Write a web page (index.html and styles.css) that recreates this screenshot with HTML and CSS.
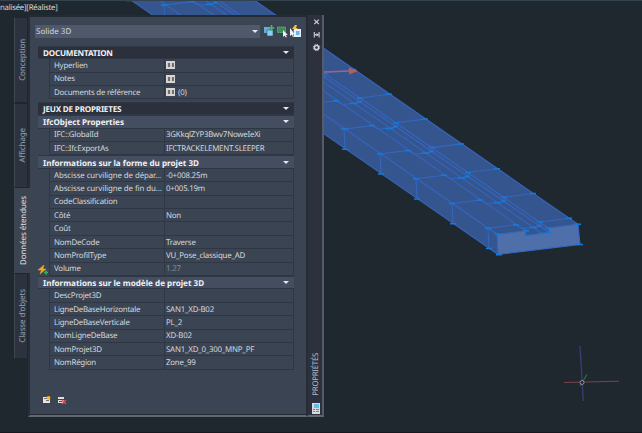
FILE: index.html
```
<!DOCTYPE html>
<html lang="fr">
<head>
<meta charset="utf-8">
<title>Propriétés</title>
<link rel="stylesheet" href="styles.css">
</head>
<body>
<svg class="scene" viewBox="0 0 642 433" width="642" height="433">
  <defs>
    <g id="section">
      <path class="edge" d="M489 248.500L488 228.300L516 224.800L523 228.500L540 226.500V222L569 218.300"/>
      <path class="grip" d="M486 248.500h6M485 228.300h6M513 224.800h6M530 227.600h7M537 225.800h5M537 222h6M566 218.300h6"/>
    </g>
  </defs>
  <path class="solid" d="M131 0H254L578 224.300L580 244.500L498 254.500Z"/>
  <path class="face" d="M497 234.300L526 230.800V235.500L549 232.500L548 228L578 224.300L580 244.500L498 254.500Z"/>
  <path class="edge" d="M131 0L498 254.500L580 244.500L578 224.300L254 0M497 234.300L159 0M526 231L192 0M542 233.500L205 0M549 232.500L213 0M548 228L218 0M498 254.500L497 234.300L526 230.800L525 235.500L549 232.500L548 228L578 224.300"/>
  <use href="#section"/>
  <use href="#section" x="-36" y="-24.800"/>
  <use href="#section" x="-72" y="-49.600"/>
  <use href="#section" x="-108" y="-74.400"/>
  <use href="#section" x="-144" y="-99.200"/>
  <use href="#section" x="-180" y="-124"/>
  <use href="#section" x="-216" y="-148.800"/>
  <use href="#section" x="-252" y="-173.600"/>
  <use href="#section" x="-288" y="-198.400"/>
  <use href="#section" x="-324" y="-223.200"/>
  <use href="#section" x="-360" y="-248"/>
  <path class="grip" d="M495 234.300h6M496 254.700h6M523 230.800h6M525 235.700h5M540 233.500h6M547 232.500h5M545 228h6M575 224.300h6M577 244.500h6"/>
  <path class="arrow" d="M323 72L350 71"/>
  <path class="arrow-head" d="M349 67.500L358 71L349 74.500Z"/>
  <path class="axis-x" d="M564 382.500L619 381.200"/>
  <path class="axis-z" d="M580 346L583.300 401"/>
  <path class="axis-y" d="M580 386L587 374.500"/>
  <circle class="origin" cx="582" cy="382.500" r="2"/>
</svg>
<div class="topline"></div>
<div class="viewlabel">nalisée][Réaliste]</div>
<div class="palette">
  <nav class="tabs">
    <div class="tab t1"><span>Conception</span></div>
    <div class="tab t2"><span>Affichage</span></div>
    <div class="tab t3 active"><span>Données étendues</span></div>
    <div class="tab t4"><span>Classe d'objets</span></div>
  </nav>
  <main class="panel">
    <div class="toolbar">
      <div class="combo"><span>Solide 3D</span><i class="caret"></i></div>
      <svg class="tools" viewBox="0 0 39 13" width="39" height="13">
        <path fill="#63add9" d="M1 2h6v6H1z"/><path fill="#8bcdf0" stroke="#34546a" stroke-width=".6" d="M4 5h6v6H4z"/>
        <path stroke="#4fb577" stroke-width="1.600" d="M8.500 0v6M5.800 3h5.500"/>
        <path fill="#398c58" stroke="#66c78b" stroke-width=".8" stroke-dasharray="1.200 .6" d="M14.500 2h8v5.500h-8z"/>
        <path fill="#eef0f2" d="M20 5v7l1.600-1.500 1.200 2 1-.6-1-1.900h2z"/>
        <path fill="#f4bd54" d="M32 0l-3 4h2l-1 3 5-4h-2l1-3z"/>
        <path fill="#f2f3f4" d="M27 3v8l1.700-1.600L30 12l1-.6-1.200-2H32z"/>
        <path fill="#e8edf1" d="M31 4h7v8h-7z"/><path fill="#65b8e9" d="M33 6h3.500v4H33z"/>
      </svg>
    </div>
    <div class="grid">
      <div class="head dark">DOCUMENTATION<i class="caret"></i></div>
      <div class="row"><b>Hyperlien</b><span><i class="table"></i></span></div>
      <div class="row"><b>Notes</b><span><i class="table"></i></span></div>
      <div class="row"><b>Documents de référence</b><span><i class="table"></i>(0)</span></div>
      <div class="head dark second">JEUX DE PROPRIETES<i class="caret"></i></div>
      <div class="head">IfcObject Properties<i class="caret"></i></div>
      <div class="row"><b>IFC::GlobalId</b><span>3GKkqlZYP3Bwv7NoweIeXi</span></div>
      <div class="row"><b>IFC::IfcExportAs</b><span>IFCTRACKELEMENT.SLEEPER</span></div>
      <div class="head">Informations sur la forme du projet 3D<i class="caret"></i></div>
      <div class="row"><b class="wide">Abscisse curviligne de dépar...</b><span>-0+008.25m</span></div>
      <div class="row"><b class="wide">Abscisse curviligne de fin du...</b><span>0+005.19m</span></div>
      <div class="row"><b>CodeClassification</b><span></span></div>
      <div class="row"><b>Côté</b><span>Non</span></div>
      <div class="row"><b>Coût</b><span></span></div>
      <div class="row"><b>NomDeCode</b><span>Traverse</span></div>
      <div class="row"><b>NomProfilType</b><span>VU_Pose_classique_AD</span></div>
      <div class="row"><svg class="bolt" viewBox="0 0 10 10" width="10" height="10"><path fill="#f5a91c" stroke="#f5a91c" stroke-width=".5" d="M6 0L0 5h3.500L2 9l6-5H5z"/><path stroke="#32b15c" stroke-width="1.500" d="M8 5.500v4M6 7.500h4"/></svg><b>Volume</b><span class="muted">1.27</span></div>
      <div class="head">Informations sur le modèle de projet 3D<i class="caret"></i></div>
      <div class="row"><b>DescProjet3D</b><span></span></div>
      <div class="row"><b>LigneDeBaseHorizontale</b><span>SAN1_XD-B02</span></div>
      <div class="row"><b>LigneDeBaseVerticale</b><span>PL_2</span></div>
      <div class="row"><b>NomLigneDeBase</b><span>XD-B02</span></div>
      <div class="row"><b>NomProjet3D</b><span>SAN1_XD_0_300_MNP_PF</span></div>
      <div class="row"><b>NomRégion</b><span>Zone_99</span></div>
    </div>
    <svg class="actions" viewBox="0 0 26 9" width="26" height="9">
      <path fill="#e9e4e2" d="M1 1h7v6H1z"/><path fill="#776c70" d="M2 2h3v1H2zM4 4h3v1H4z"/><circle cx="6.500" cy="1.800" r="1.900" fill="#f2b628"/>
      <path fill="#e0dcdb" d="M16 1h6v2h-6zM16 4h6v3h-6z"/><path fill="#4d5059" d="M17 5h3v1h-3z"/><path stroke="#e24b50" stroke-width="1.300" d="M20 4l4 4M24 4l-4 4"/>
    </svg>
  </main>
  <aside class="rail">
    <svg viewBox="0 0 10 40" width="10" height="40">
      <g fill="none" stroke="#d0d3d8"><path stroke-width="1.200" d="M3.300 3.600l4.500 4.500M7.800 3.600l-4.500 4.500"/><path stroke-width="1.100" d="M3.300 16v5.500M8.100 16v5.500"/><circle cx="5.500" cy="31.500" r="2.100" stroke-width="1.500"/><circle cx="5.500" cy="31.500" r="3.200" stroke-width="1" stroke-dasharray="1.250"/></g>
      <path fill="#d0d3d8" d="M3.500 18.800l2.200-1.500v3zM8.100 18.800L5.900 17.300v3z"/>
    </svg>
    <div class="railtext">PROPRIÉTÉS</div>
    <svg viewBox="0 0 8 11" width="8" height="11"><path fill="#d8dadc" d="M0 0h8v11H0z"/><path fill="#67bde9" d="M2 1h5v4H2z"/><path fill="#7c8288" d="M1 6h2v1H1zM4 6h3v1H4zM1 8h2v1H1zM4 8h3v1H4z"/></svg>
  </aside>
</div>
<div class="baseline"></div>
</body>
</html>
```
FILE: styles.css
```
* { box-sizing: border-box; }
body { margin: 0; width: 642px; height: 433px; overflow: hidden; position: relative; background: #20282f; font: 7.9px/1 "Noto Sans", "Open Sans", sans-serif; letter-spacing: -.23px; text-rendering: geometricPrecision; color: #d4d8de; }
.scene { position: absolute; inset: 0; }
.solid { fill: #35558f; }
.face { fill: #4f6faa; }
.edge { fill: none; stroke: #3565be; stroke-width: 1.1; }
.grip { fill: none; stroke: #127bdc; stroke-width: 1.5; }
.arrow { stroke: #a7636d; stroke-width: 1.5; }
.arrow-head { fill: #b75e5a; }
.axis-x { stroke: #79424b; }
.axis-z { stroke: #393b72; stroke-width: 1.4; }
.axis-y { stroke: #2c713f; stroke-width: 1.2; }
.origin { fill: #20282f; stroke: #8c9295; }
.topline { position: absolute; inset: 0 0 auto; height: 1px; background: #33424f; }
.baseline { position: absolute; inset: auto 0 0; height: 1px; background: #17171f; }
.viewlabel { position: absolute; left: 0; top: 3px; font-size: 7.8px; line-height: 10px; letter-spacing: -.25px; }
.palette { position: absolute; left: 14px; top: 15px; width: 310px; height: 402px; display: flex; }
.tabs { width: 14px; padding-top: 2px; }
.tab { display: flex; align-items: center; justify-content: center; background: #2c323e; border: 1px solid #20252f; border-left-color: #3f4650; color: #9ca2ac; font-size: 8px; letter-spacing: -.1px; }
.tab span { writing-mode: vertical-rl; transform: rotate(180deg); white-space: nowrap; padding-right: 2px; margin-right: -2px; }
.t1 { height: 86px; }
.t2 { height: 85px; }
.t3 { height: 85px; }
.t4 { height: 86px; }
.tab.active { background: #3c4452; border-color: #3c4452; color: #dde0e5; width: 17px; padding-right: 2px; position: relative; z-index: 1; }
.panel { width: 280px; background: #3b4452; border: 2px solid #262d37; border-top-color: #242a34; border-bottom: 2px solid #626872; padding: 8px 0 0 5px; box-shadow: inset 0 -1px #252b35; }
.toolbar { display: flex; height: 13px; align-items: center; gap: 3px; }
.combo { width: 225px; height: 13px; background: #4f596b; display: flex; align-items: center; justify-content: space-between; padding: 0 2px 0 1px; font-size: 8px; letter-spacing: 0; }
.combo span { padding-top: 1px; }
.caret { width: 0; height: 0; border: 3px solid transparent; border-top: 3.5px solid #e5e7ea; border-bottom: 0; }
.grid { width: 256px; margin: 7.8px 0 0 3px; }
.head, .row { height: 13.42px; display: flex; align-items: center; white-space: nowrap; }
.head { background: #454e61; color: #f2f3f5; font-size: 8.1px; font-weight: 700; letter-spacing: 0; line-height: 9px; padding: 2px 5px 0 5px; justify-content: space-between; border: 1px solid #303744; border-width: 1px 0; }
.head .caret { margin-top: -2px; }
.dark { background: #2b303c; letter-spacing: -.2px; }
.second { margin-top: 2.3px; }
.row { margin-left: 11px; border: 1px solid #303744; border-top: 0; position: relative; }
.row b { font-weight: 400; width: 114px; padding: 3px 0 0 4px; }
.row .wide { letter-spacing: -.1px; }
.row span { flex: 1; align-self: stretch; display: flex; align-items: center; gap: 3px; border-left: 1px solid #303744; padding: 3px 0 0 1px; }
.row .muted { color: #858b95; }
.bolt { position: absolute; left: -12px; top: 2px; }
.table { width: 9px; height: 8px; margin-top: -3px; border: 1px solid #d8d6d5; border-width: 2px 1px; background: repeating-linear-gradient(90deg, #cfcccb 0 1px, #6f6e72 1px 3px, #cfcccb 3px 4px); }
.actions { display: block; margin: 26px 0 0 7px; overflow: visible; }
.rail { width: 16px; background: #2c313d; border-right: 2px solid #555c67; border-bottom: 2px solid #626872; display: flex; flex-direction: column; align-items: center; padding: 1px 0 1px 1px; }
.railtext { writing-mode: vertical-rl; transform: rotate(180deg); margin: auto -2px 7px 0; color: #b7bbc3; font-size: 7.8px; letter-spacing: -.25px; }
```
